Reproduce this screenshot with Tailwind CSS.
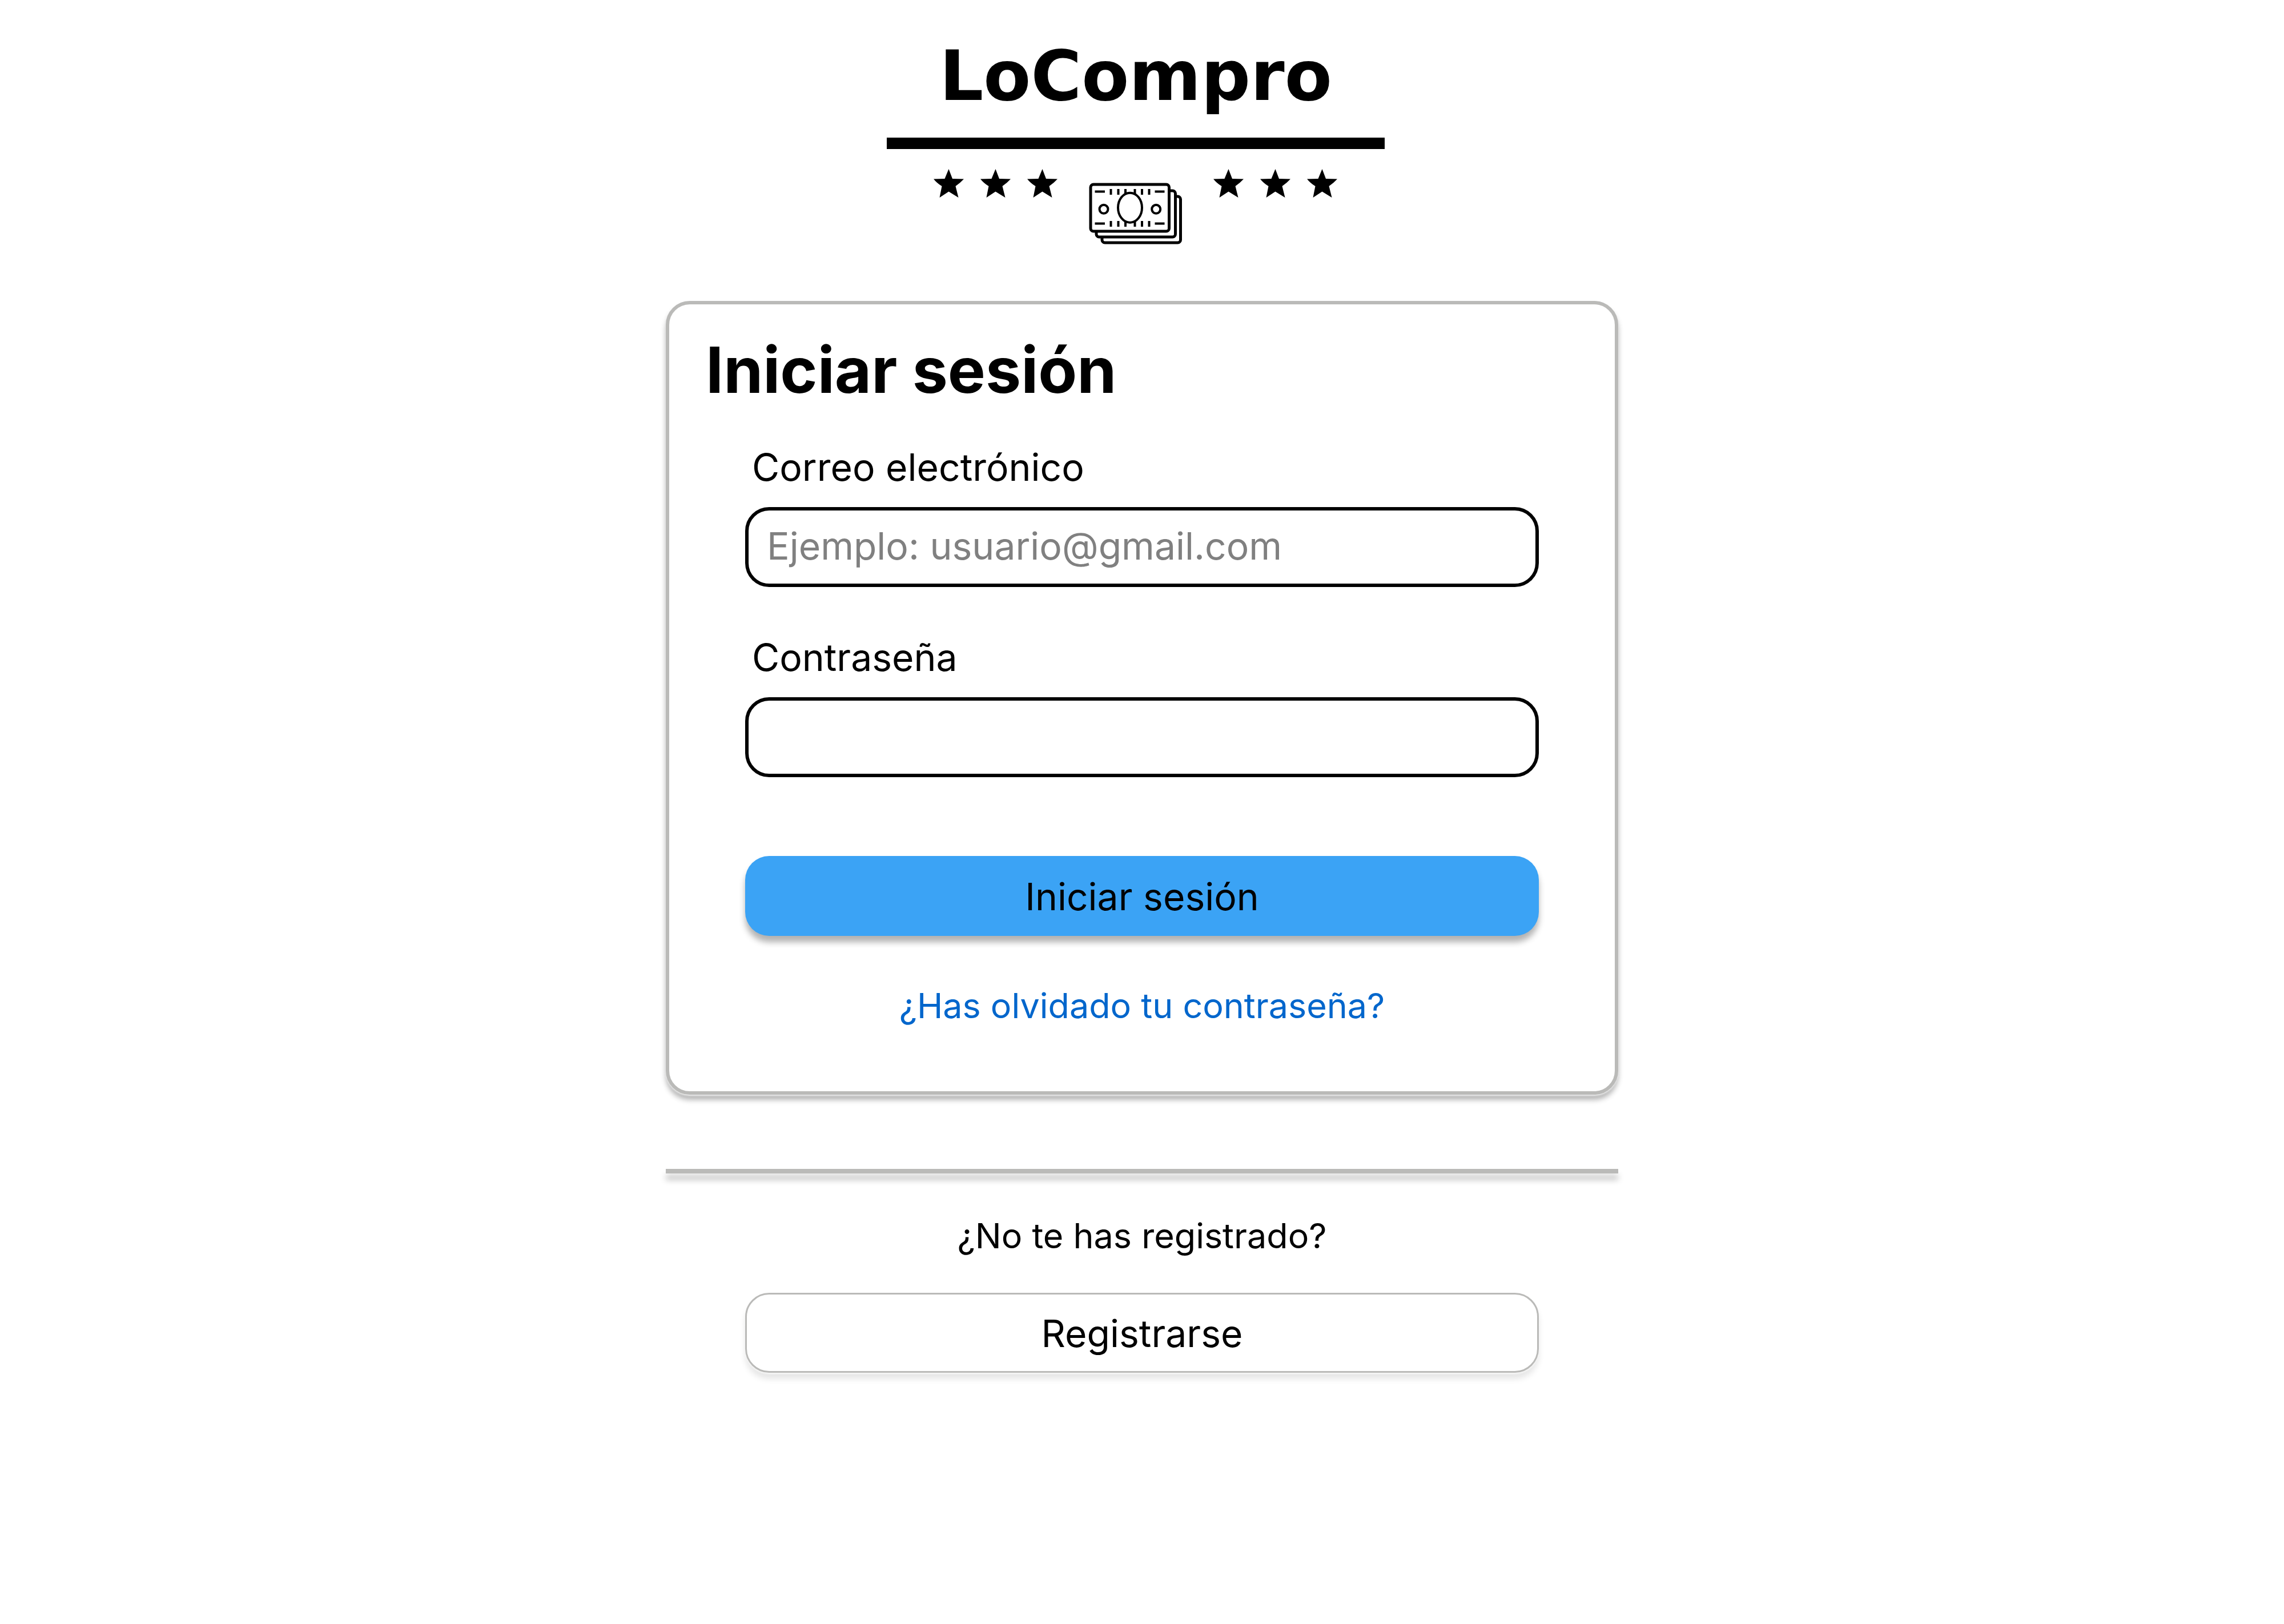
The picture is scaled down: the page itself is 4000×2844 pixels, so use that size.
<!DOCTYPE html>
<html lang="es">
<head>
<meta charset="utf-8">
<meta name="viewport" content="width=device-width, initial-scale=1">
<title>LoCompro - Iniciar sesión</title>
<script src="https://cdn.jsdelivr.net/npm/@tailwindcss/browser@4"></script>
</head>
<body class="min-h-screen bg-white font-['Inter',sans-serif] text-black">
<header class="flex flex-col items-center pt-[70px] pr-[22px]">
  <div class="font-['DejaVu_Sans',sans-serif] text-[121px] leading-[128px] font-bold">LoCompro</div>
  <div class="mt-[43px] h-5 w-full max-w-[872px] bg-black"></div>
  <svg class="mt-[35px] w-full max-w-[872px]" viewBox="0 0 872 134" aria-hidden="true">
    <defs>
      <path id="star" d="M26.500 0L33 17L53 17.500Q46 25 38.500 30L43.500 50L26.500 39.500L10.500 50L14.500 30Q6 25 0 17.500L19.500 17Z"/>
      <g id="ticks"><path d="M37.500 35.500h17.500M142.500 35.500h17M65.500 31v10M78.500 31v10M91 31v10M107.500 31v10M120 31v10M132.500 31v10"/></g>
    </defs>
    <use href="#star" x="82"/><use href="#star" x="164"/><use href="#star" x="246"/>
    <use href="#star" x="572"/><use href="#star" x="654"/><use href="#star" x="736"/>
    <g transform="translate(327 4)" fill="#fff" stroke="#000" stroke-width="5">
      <rect x="50" y="44" width="137.500" height="81" rx="5"/>
      <rect x="40" y="34" width="138.500" height="81" rx="5"/>
      <rect x="30" y="23" width="137.500" height="82" rx="5"/>
      <g stroke-width="4">
        <use href="#ticks"/>
        <use href="#ticks" y="56"/>
        <ellipse cx="99" cy="63.700" rx="21" ry="26"/>
        <circle cx="53" cy="66.300" r="7.500"/>
        <circle cx="144.700" cy="66.300" r="7.500"/>
      </g>
    </g>
  </svg>
</header>

<main class="mx-auto mt-[97px] w-full max-w-[1668px]">
  <section class="rounded-[42px] border-6 border-[#babab8] bg-white pt-[51px] pb-[114px] shadow-[0_2px_3px_#f0f0f0,0_9px_10px_rgba(0,0,0,0.3)]">
    <h1 class="px-16 text-[111px] leading-[128px] font-bold">Iniciar sesión</h1>
    <form class="mt-[66px] flex flex-col px-[133px] text-[66px] leading-[80px]">
      <label for="correo" class="pl-3">Correo electrónico</label>
      <input id="correo" type="email" placeholder="Ejemplo: usuario@gmail.com" class="mt-[30px] h-[140px] w-full rounded-[42px] border-6 border-black bg-white px-8 pb-1 placeholder:text-[#808080]">
      <label for="clave" class="mt-[83px] pl-3">Contraseña</label>
      <input id="clave" type="password" class="mt-[30px] h-[140px] w-full rounded-[42px] border-6 border-black bg-white px-8 pb-1">
      <button type="submit" class="mt-[138px] h-[140px] w-full rounded-[42px] bg-[#3ba3f5] pt-0.5 shadow-[0_11px_11px_rgba(0,0,0,0.3)]">Iniciar sesión</button>
      <a href="#" class="mt-[86px] self-center text-[61px] leading-[72px] text-[#0066cc]">¿Has olvidado tu contraseña?</a>
    </form>
  </section>

  <hr class="mt-[130px] h-2 border-0 bg-[#babab8] shadow-[0_11px_11px_rgba(0,0,0,0.25)]">

  <section class="mt-[73px] flex flex-col items-center px-[139px]">
    <p class="text-[61px] leading-[72px]">¿No te has registrado?</p>
    <button type="button" class="mt-16 h-[140px] w-full rounded-[42px] border-3 border-[#babab8] bg-white pt-0.5 text-[66px] leading-[80px] shadow-[0_2px_3px_#fafafa,0_11px_11px_rgba(0,0,0,0.1)]">Registrarse</button>
  </section>
</main>
</body>
</html>
